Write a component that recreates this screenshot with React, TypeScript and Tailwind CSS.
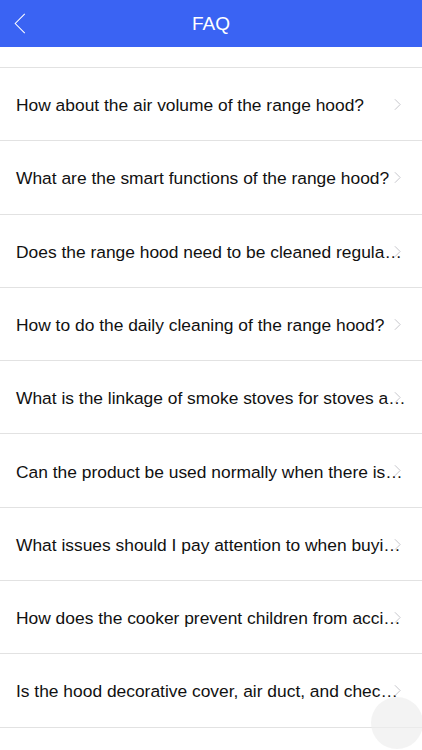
const questions = [
  "How about the air volume of the range hood?",
  "What are the smart functions of the range hood?",
  "Does the range hood need to be cleaned regula…",
  "How to do the daily cleaning of the range hood?",
  "What is the linkage of smoke stoves for stoves a…",
  "Can the product be used normally when there is…",
  "What issues should I pay attention to when buyi…",
  "How does the cooker prevent children from acci…",
  "Is the hood decorative cover, air duct, and chec…",
];

const Chevron = ({ className }: { className?: string }) => (
  <svg viewBox="0 0 8 14" className={className} fill="none">
    <path d="M1 1l6 6-6 6" stroke="currentColor" strokeWidth="1.1" />
  </svg>
);

export default function App() {
  return (
    <div
      className="relative h-[750px] w-[422px] overflow-hidden bg-white"
      style={{ fontFamily: '"Liberation Sans", Arial, sans-serif' }}
    >
      {/* HEADER */}
      <div className="relative flex h-[47px] items-center justify-center bg-[#3a63f3]">
        <svg viewBox="0 0 12 22" className="absolute left-[14px] top-[13px] h-[21px] w-[12px]" fill="none">
          <path d="M11 1L1 11l10 10" stroke="white" strokeWidth="1.1" />
        </svg>
        <span className="pt-[1px] text-[19px] text-white">FAQ</span>
      </div>

      <div className="h-[21px] border-b border-[#e2e2e2]" />

      {questions.map((q) => (
        <div key={q} className="relative flex h-[73.3px] items-center border-b border-[#e2e2e2] pl-4">
          <span className="whitespace-nowrap pt-[2px] text-[17.4px] text-[#111]">{q}</span>
          <Chevron className="absolute right-[21px] top-[30px] h-[13px] w-[7px] text-[#c4c4c9]" />
        </div>
      ))}

      <div className="absolute left-[371px] top-[697px] h-[52px] w-[52px] rounded-full bg-[#eeeeee]/70" />
    </div>
  );
}
